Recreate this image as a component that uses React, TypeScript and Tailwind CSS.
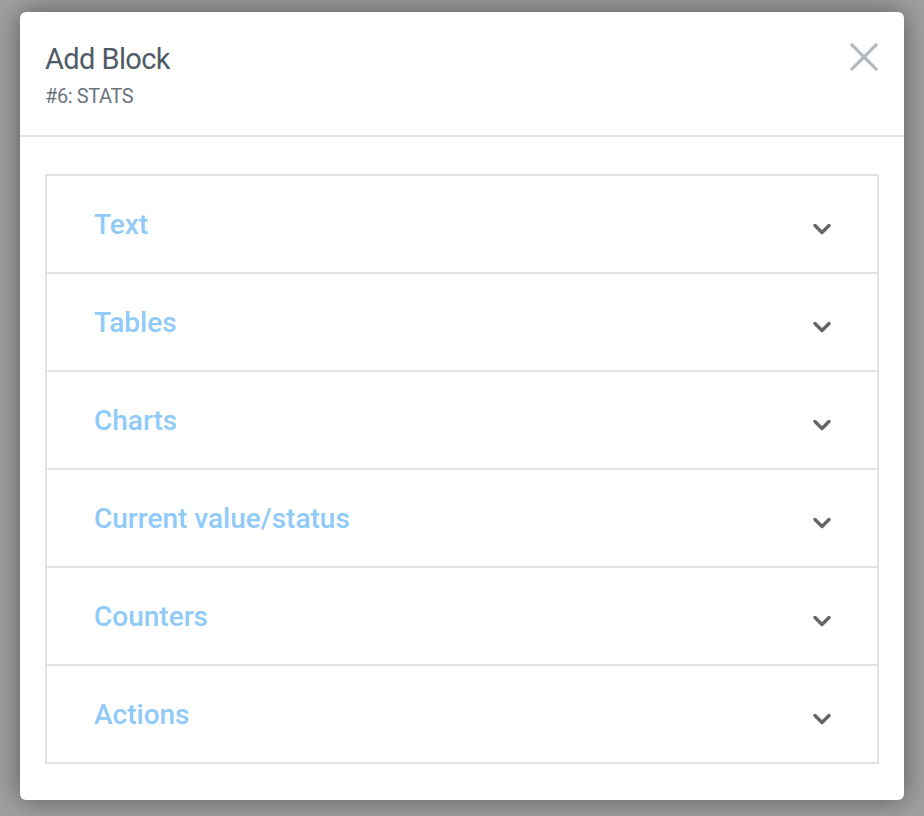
import { ChevronDown } from "lucide-react";

const sections = ["Text", "Tables", "Charts", "Current value/status", "Counters", "Actions"];

export default function App() {
  return (
    <div
      className="w-[924px] h-[816px] bg-[#a0a0a0] pt-[12px] px-[20px] overflow-hidden"
      style={{ fontFamily: "Roboto, 'Liberation Sans', sans-serif" }}
    >
      <div className="bg-white rounded-[6px] h-[788px] shadow-[0_0_28px_rgba(0,0,0,0.45)] flex flex-col">
        {/* Header */}
        <div className="h-[125px] border-b-2 border-[#e3e3e3] pl-[25px] pr-[26px] pt-[30px] flex justify-between items-start">
          <div>
            <h1 className="text-[29px] leading-[34px] text-[#4f5b66] tracking-[-0.6px]">Add Block</h1>
            <p className="text-[20px] leading-[24px] mt-[8px] text-[#6b757d] tracking-[-0.4px]">#6: STATS</p>
          </div>
          <button className="mt-[1px] text-[#b4b9be]">
            <svg width="28" height="28" viewBox="0 0 28 28" fill="none" stroke="currentColor" strokeWidth="3.2">
              <path d="M1 1 L27 27 M27 1 L1 27" />
            </svg>
          </button>
        </div>

        {/* Blocks */}
        <div className="px-[25px] pt-[37px]">
          <div className="border-2 border-[#e3e3e3]">
            {sections.map((s, i) => (
              <div
                key={s}
                className={`flex items-center justify-between pl-[47px] pr-[41px] ${
                  i > 0 ? "border-t-2 border-[#e3e3e3] h-[98px]" : "h-[96px]"
                }`}
              >
                <span className="text-[28px] font-medium text-[#90caf9] mt-[2px]">{s}</span>
                <ChevronDown size={28} strokeWidth={3} className="text-[#666] mt-[10px]" />
              </div>
            ))}
          </div>
        </div>
      </div>
    </div>
  );
}
